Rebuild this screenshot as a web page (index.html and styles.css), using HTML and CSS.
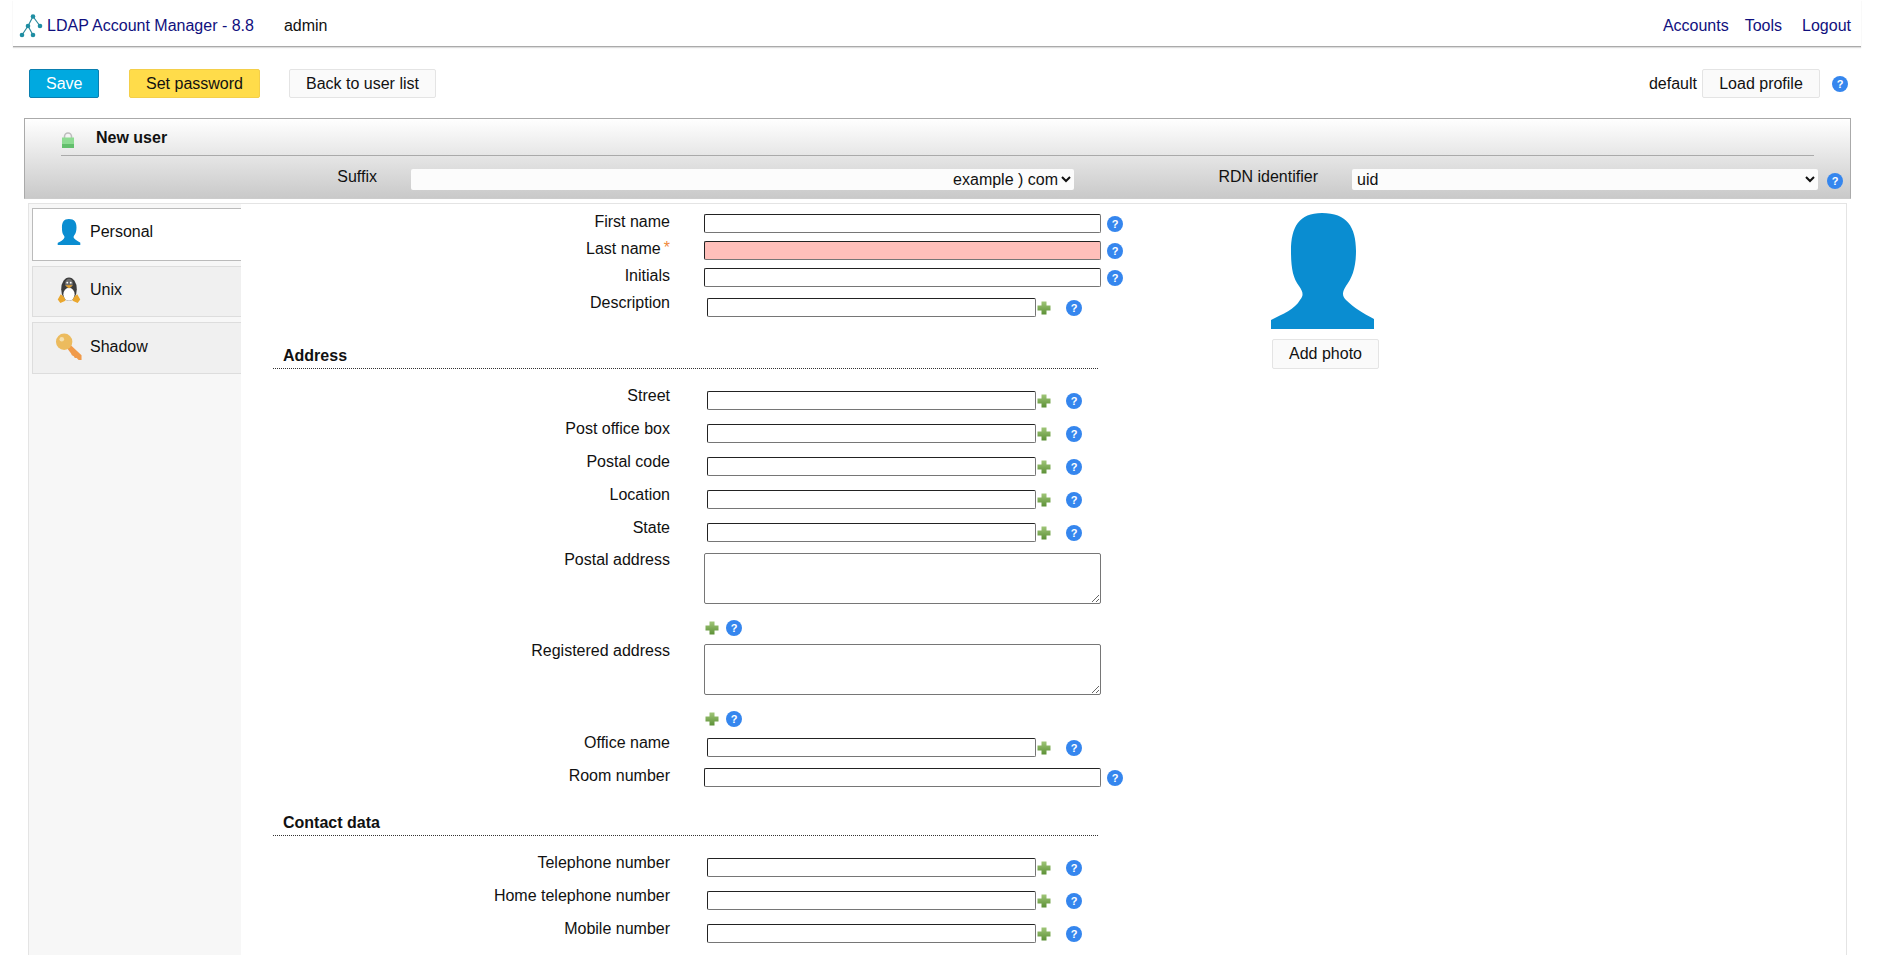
FILE: index.html
```html
<!DOCTYPE html>
<html lang="en">
<head>
  <meta charset="UTF-8">
  <title>LDAP Account Manager</title>
  <link rel="stylesheet" href="styles.css">
</head>
<body>

  <svg width="0" height="0" class="defs">
    <defs>
      <linearGradient id="plusFill" x1="0" y1="0" x2="0" y2="1">
        <stop offset="0" stop-color="#a0c678"/>
        <stop offset="1" stop-color="#5c9036"/>
      </linearGradient>
    </defs>
    <symbol id="plus" viewBox="0 0 14 14">
      <path d="M4.5 0.5h5v4h4v5h-4v4h-5v-4h-4v-5h4z" fill="url(#plusFill)"/>
    </symbol>
    <symbol id="person" viewBox="0 0 103 116">
      <path d="M51 0C76 0 85 14 85 38C85 55 81 65 75 73C71 79 71 83 75 87C83 95 92 100 103 106V116H0V107C12 101 24 96 29 87C33 82 32 79 28 73C22 65 20 55 20 38C20 14 28 0 51 0Z" fill="#0a8dd1"/>
    </symbol>
  </svg>

  <header class="topbar">
    <div class="brand">
      <svg class="logo" width="24" height="24" viewBox="0 0 24 24">
        <path d="M14 2.5L9 12L3 21M9 12L14 21M14 2.5L21 12" stroke="#2c8a9c" stroke-width="1.2" fill="none"/>
        <circle cx="14" cy="2.5" r="2.3" fill="#1f8ea3"/>
        <circle cx="9" cy="12" r="2.3" fill="#1f8ea3"/>
        <circle cx="21" cy="12" r="2.3" fill="#1f8ea3"/>
        <circle cx="3" cy="21" r="2.3" fill="#1f8ea3"/>
        <circle cx="14" cy="21" r="2.3" fill="#1f8ea3"/>
      </svg>
      <a href="#" class="brand-link">LDAP Account Manager - 8.8</a>
      <span class="user">admin</span>
    </div>
    <nav class="topnav">
      <a href="#">Accounts</a>
      <a href="#">Tools</a>
      <a href="#" class="logout">Logout</a>
    </nav>
  </header>

  <div class="actions">
    <button class="btn btn-save">Save</button>
    <button class="btn btn-password">Set password</button>
    <button class="btn btn-back">Back to user list</button>
    <div class="profile">
      <span>default</span>
      <button class="btn btn-load">Load profile</button>
      <span class="help help-profile">?</span>
    </div>
  </div>

  <section class="panel">
    <div class="panel-title">
      <svg class="lock" width="12" height="16" viewBox="0 0 12 16">
        <path d="M2.5 6V4.5a3.5 3.5 0 0 1 7 0V6" fill="none" stroke="#bdbdbd" stroke-width="1.6"/>
        <rect x="0" y="5.5" width="12" height="10.5" fill="#8ddb92"/>
        <rect x="0" y="12" width="12" height="4" fill="#62bf6c"/>
      </svg>
      <strong>New user</strong>
    </div>
    <div class="panel-fields">
      <label class="suffix-label">Suffix</label>
      <select class="suffix-select"><option>example ) com</option></select>
      <label class="rdn-label">RDN identifier</label>
      <select class="rdn-select"><option>uid</option></select>
      <span class="help">?</span>
    </div>
  </section>

  <div class="content">
    <aside class="tabs">
      <div class="tab active">
        <svg width="30" height="26" viewBox="0 0 103 116"><use href="#person"/></svg>
        <span>Personal</span>
      </div>
      <div class="tab">
        <svg width="30" height="26" viewBox="0 0 26 30">
          <ellipse cx="13" cy="14" rx="9" ry="13.5" fill="#3c3c3c"/>
          <ellipse cx="13" cy="20" rx="6.5" ry="7.5" fill="#fff"/>
          <ellipse cx="13" cy="7.5" rx="4.5" ry="5.5" fill="#6d6d6d"/>
          <circle cx="11" cy="6.5" r="1.1" fill="#fff"/>
          <circle cx="15" cy="6.5" r="1.1" fill="#fff"/>
          <path d="M8.5 9.5h9l-4.5 3.5z" fill="#e8a32c"/>
          <path d="M0 26l3.5-6 4 3.5 1.5 4-6 2.500zM26 26l-3.500-6-4 3.500-1.500 4 6 2.500z" fill="#eaa72e"/>
        </svg>
        <span>Unix</span>
      </div>
      <div class="tab tab-last">
        <svg width="30" height="27" viewBox="0 0 28 28">
          <path d="M12 13l2-2 13 12v5h-3l-2-2-2 0-1-2-2-1-1-2-3-4z" fill="#f09a4a"/>
          <circle cx="9" cy="9" r="8.500" fill="#ecbb5e"/>
          <circle cx="6.500" cy="6.500" r="2.400" fill="#f4dfae"/>
        </svg>
        <span>Shadow</span>
      </div>
    </aside>

    <main class="main">
      <form class="user-form">
        <div class="row"><label>First name</label><div class="field"><input class="wide"><span class="help">?</span></div></div>
        <div class="row"><label>Last name<i class="req">*</i></label><div class="field"><input class="wide missing"><span class="help">?</span></div></div>
        <div class="row"><label>Initials</label><div class="field"><input class="wide"><span class="help">?</span></div></div>
        <div class="row multi row-desc"><label>Description</label><div class="field"><input class="short"><svg class="plus"><use href="#plus"/></svg><span class="help">?</span></div></div>

        <h3 class="group">Address</h3>

        <div class="row multi"><label>Street</label><div class="field"><input class="short"><svg class="plus"><use href="#plus"/></svg><span class="help">?</span></div></div>
        <div class="row multi"><label>Post office box</label><div class="field"><input class="short"><svg class="plus"><use href="#plus"/></svg><span class="help">?</span></div></div>
        <div class="row multi"><label>Postal code</label><div class="field"><input class="short"><svg class="plus"><use href="#plus"/></svg><span class="help">?</span></div></div>
        <div class="row multi"><label>Location</label><div class="field"><input class="short"><svg class="plus"><use href="#plus"/></svg><span class="help">?</span></div></div>
        <div class="row multi"><label>State</label><div class="field"><input class="short"><svg class="plus"><use href="#plus"/></svg><span class="help">?</span></div></div>

        <div class="row area area-first"><label>Postal address</label><div class="field-stack"><textarea></textarea><div class="area-icons"><svg class="plus"><use href="#plus"/></svg><span class="help">?</span></div></div></div>
        <div class="row area"><label>Registered address</label><div class="field-stack"><textarea></textarea><div class="area-icons"><svg class="plus"><use href="#plus"/></svg><span class="help">?</span></div></div></div>

        <div class="row multi row-office"><label>Office name</label><div class="field"><input class="short"><svg class="plus"><use href="#plus"/></svg><span class="help">?</span></div></div>
        <div class="row"><label>Room number</label><div class="field"><input class="wide"><span class="help">?</span></div></div>

        <h3 class="group">Contact data</h3>

        <div class="row multi"><label>Telephone number</label><div class="field"><input class="short"><svg class="plus"><use href="#plus"/></svg><span class="help">?</span></div></div>
        <div class="row multi"><label>Home telephone number</label><div class="field"><input class="short"><svg class="plus"><use href="#plus"/></svg><span class="help">?</span></div></div>
        <div class="row multi"><label>Mobile number</label><div class="field"><input class="short"><svg class="plus"><use href="#plus"/></svg><span class="help">?</span></div></div>
      </form>

      <div class="photo">
        <svg width="103" height="116" viewBox="0 0 103 116"><use href="#person"/></svg>
        <button class="btn btn-photo">Add photo</button>
      </div>
    </main>
  </div>

</body>
</html>
```

FILE: styles.css
```css
html, body {
  height: 955px;
  overflow: hidden;
}

body {
  margin: 0;
  font-family: "Liberation Sans", Arial, sans-serif;
  font-size: 16px;
  color: #111;
  background: #fff;
}

.defs {
  position: absolute;
}

a {
  color: #10107e;
  text-decoration: none;
}

/* top bar */
.topbar {
  display: flex;
  justify-content: space-between;
  align-items: center;
  box-sizing: border-box;
  height: 47px;
  margin: 0 23px 0 13px;
  padding: 7px 0 1px;
  border-bottom: 1px solid #aaa;
  box-shadow: 0 1px 1px #ddd;
}

.brand {
  display: flex;
  align-items: center;
  padding-left: 6px;
}

.logo {
  margin: 0 4px 0 0;
}

.user {
  margin-left: 30px;
}

.topnav {
  display: flex;
  gap: 16px;
  padding-right: 10px;
}

.logout {
  margin-left: 4px;
}

/* buttons */
.btn {
  height: 29px;
  padding: 0 16px;
  font: 16px "Liberation Sans", Arial, sans-serif;
  color: #111;
  background: #fafafa;
  border: 1px solid #e4e4e4;
  border-radius: 2px;
}

.btn-save {
  width: 70px;
  margin-right: 30px;
  color: #fff;
  background: #00a9e0;
  border-color: #0a7fb0;
}

.btn-password {
  width: 131px;
  margin-right: 29px;
  background: #ffdc4a;
  border-color: #f4cf4a;
}

.btn-load {
  width: 118px;
  padding: 0;
}

.actions {
  display: flex;
  align-items: center;
  margin-top: 22px;
  padding: 0 36px 0 29px;
}

.profile {
  display: flex;
  align-items: center;
  margin-left: auto;
  gap: 5px;
}

.help-profile {
  margin-left: 7px;
}

/* help and plus icons */
.help {
  flex: none;
  display: inline-block;
  width: 16px;
  height: 16px;
  border-radius: 50%;
  background: #3586ee;
  color: #fff;
  font-size: 11px;
  font-weight: bold;
  line-height: 16px;
  text-align: center;
}

.plus {
  flex: none;
  width: 14px;
  height: 14px;
}

/* title panel */
.panel {
  height: 79px;
  margin: 20px 33px 0 24px;
  border: 1px solid #aaa;
  border-bottom-color: #ccc;
  background: linear-gradient(to bottom, #fff, #c9c9c9);
}

.panel-title {
  display: flex;
  align-items: center;
  box-sizing: border-box;
  height: 37px;
  margin: 0 36px;
  padding: 2px 0 0 1px;
  border-bottom: 1px solid #aaa;
}

.lock {
  margin: 3px 22px 0 0;
}

.panel-fields {
  display: flex;
  align-items: flex-start;
}

.suffix-label {
  width: 352px;
  margin-top: 12px;
  text-align: right;
}

select {
  height: 21px;
  margin-top: 13px;
  border: none;
  border-radius: 2px;
  background: #fcfcfc;
  font: 16px "Liberation Sans", Arial, sans-serif;
  color: #111;
}

.suffix-select {
  width: 663px;
  margin-left: 34px;
  text-align-last: right;
}

.rdn-label {
  width: 244px;
  margin-top: 12px;
  text-align: right;
}

.rdn-select {
  width: 466px;
  margin-left: 34px;
  padding-left: 1px;
}

.panel-fields .help {
  margin: 17px 0 0 9px;
}

/* content */
.content {
  display: flex;
  height: 760px;
  margin: 4px 37px 0 28px;
  border: 1px solid #e4e4e4;
  border-bottom: none;
}

.tabs {
  width: 212px;
  flex: none;
  padding: 4px 0 0 3px;
  box-sizing: border-box;
  background: #f7f7f7;
}

.tab {
  display: flex;
  align-items: center;
  box-sizing: border-box;
  height: 51px;
  margin-bottom: 5px;
  padding: 0 0 3px 21px;
  background: #f0f0f0;
  border: 1px solid #ddd;
  border-right: none;
}

.tab svg {
  margin-right: 6px;
}

.tab.active {
  height: 53px;
  padding-bottom: 5px;
  background: #fff;
  border-color: #bbb;
}

.tab-last {
  height: 52px;
}

.main {
  display: flex;
  flex: 1;
}

.user-form {
  width: 890px;
  flex: none;
  padding-top: 10px;
}

.row {
  display: grid;
  grid-template-columns: 429px 1fr;
  column-gap: 34px;
  height: 27px;
}

.row label {
  margin-top: -1px;
  text-align: right;
  line-height: 18px;
}

.row.multi label {
  margin-top: -4px;
}

.row.area label {
  margin-top: -2px;
}

.req {
  margin-left: 3px;
  color: #f08a3c;
  font-style: normal;
  line-height: 0;
  vertical-align: 1px;
}

.field {
  display: flex;
  align-items: flex-start;
}

input {
  box-sizing: border-box;
  height: 19px;
  padding: 0;
  border: 1px solid;
  border-color: #222 #767676 #767676 #222;
  border-radius: 2px;
  background: #fff;
}

.wide {
  width: 397px;
  margin-right: 6px;
}

.wide + .help {
  margin-top: 2px;
}

.missing {
  background: #ffbfba;
}

.short {
  width: 329px;
  margin-left: 3px;
}

.short + .plus {
  margin: 3px 15px 0 1px;
}

.short ~ .help {
  margin-top: 2px;
}

.multi {
  height: 33px;
}

.row-desc {
  height: 30px;
  padding-top: 3px;
}

.group {
  width: 815px;
  height: 18px;
  margin: 0 0 22px 32px;
  padding: 19px 0 3px 10px;
  box-sizing: content-box;
  font-size: 16px;
  line-height: 18px;
  border-bottom: 1px dotted #333;
}

.area {
  height: 91px;
}

.area-first {
  margin-top: -3px;
}

textarea {
  display: block;
  box-sizing: border-box;
  width: 397px;
  height: 51px;
  padding: 0;
  border: 1px solid #767676;
  border-radius: 2px;
  background: #fff;
}

.field-stack {
  display: flex;
  flex-direction: column;
}

.area-icons {
  display: flex;
  align-items: center;
  gap: 7px;
  margin: 16px 0 0 1px;
}

.row-office {
  height: 30px;
  margin-top: 3px;
}

.photo {
  display: flex;
  flex-direction: column;
  margin: 9px 0 0 140px;
}

.btn-photo {
  width: 107px;
  height: 30px;
  padding: 0;
  margin: 10px 0 0 1px;
}
```
